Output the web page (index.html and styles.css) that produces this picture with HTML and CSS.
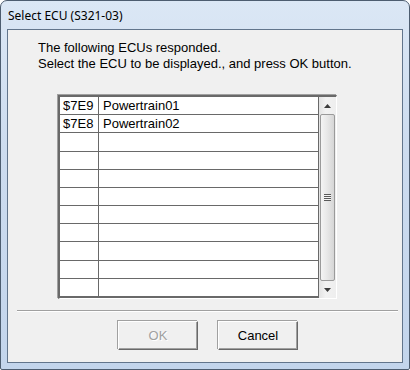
FILE: index.html
```html
<!DOCTYPE html>
<html>
<head>
<meta charset="utf-8">
<link rel="stylesheet" href="styles.css">
</head>
<body>
<div class="window">
  <div class="titlebar">Select ECU (S321-03)</div>
  <div class="client">
    <div class="message">
      <div>The following ECUs responded.</div>
      <div>Select the ECU to be displayed., and press OK button.</div>
    </div>
    <div class="listbox">
      <div class="grid">
        <div class="cell">$7E9</div><div class="cell name">Powertrain01</div>
        <div class="cell">$7E8</div><div class="cell name">Powertrain02</div>
        <div class="cell"></div><div class="cell"></div>
        <div class="cell"></div><div class="cell"></div>
        <div class="cell"></div><div class="cell"></div>
        <div class="cell"></div><div class="cell"></div>
        <div class="cell"></div><div class="cell"></div>
        <div class="cell"></div><div class="cell"></div>
        <div class="cell"></div><div class="cell"></div>
        <div class="cell"></div><div class="cell"></div>
        <div class="cell"></div><div class="cell"></div>
      </div>
      <div class="scrollbar">
        <div class="arrow">
          <svg width="7" height="4" viewBox="0 0 7 4"><path d="M0 4 L3.5 0 L7 4 Z" fill="#3c3c3c"/></svg>
        </div>
        <div class="track">
          <div class="thumb">
            <div class="grip"></div>
          </div>
        </div>
        <div class="arrow">
          <svg width="7" height="4" viewBox="0 0 7 4"><path d="M0 0 L7 0 L3.5 4 Z" fill="#3c3c3c"/></svg>
        </div>
      </div>
    </div>
    <div class="separator"></div>
    <div class="buttons">
      <button class="btn disabled">OK</button>
      <button class="btn">Cancel</button>
    </div>
  </div>
</div>
</body>
</html>
```
FILE: styles.css
```css
html, body {
  margin: 0;
  padding: 0;
  background: #ffffff;
}

.window {
  box-sizing: border-box;
  width: 410px;
  height: 370px;
  border: 1px solid #4d5d70;
  border-radius: 7px 7px 2px 2px;
  background: linear-gradient(to bottom, #dbe7f5 0%, #cddcef 40%, #c3d5ec 100%);
  padding: 0 6px 6px 6px;
  display: flex;
  flex-direction: column;
  font-family: "Liberation Sans", Arial, sans-serif;
}

.titlebar {
  height: 28px;
  line-height: 30px;
  padding-left: 1px;
  font-family: "Noto Sans", "Open Sans", sans-serif;
  font-size: 12px;
  color: #000;
}

.client {
  flex: 1;
  border: 1px solid #62758c;
  background: #f0f0f0;
  display: flex;
  flex-direction: column;
}

.message {
  padding: 10px 0 0 30px;
  font-size: 13px;
  line-height: 16px;
  color: #000;
}

.listbox {
  margin: 23px 0 0 50px;
  width: 279px;
  box-sizing: border-box;
  border-top: 2px solid #696969;
  border-left: 2px solid #696969;
  border-right: 1px solid #ffffff;
  border-bottom: 1px solid #ffffff;
  display: flex;
  box-shadow: -1px -1px 0 #a0a0a0;
}

.grid {
  width: 259px;
  height: 201px;
  box-sizing: border-box;
  display: grid;
  grid-template-columns: 38px 1fr;
  grid-template-rows: repeat(11, 1fr);
  gap: 1px;
  background: #696969;
  border-right: 1px solid #696969;
  border-bottom: 2px solid #696969;
}

.cell {
  background: #ffffff;
  font-size: 13px;
  line-height: 17px;
  padding-left: 3px;
  color: #000;
  overflow: hidden;
}

.cell.name {
  padding-left: 4px;
}

.scrollbar {
  width: 17px;
  display: flex;
  flex-direction: column;
  background: linear-gradient(to right, #e3e3e3, #f2f2f2 40%, #eeeeee);
}

.arrow {
  height: 17px;
  display: flex;
  align-items: center;
  justify-content: center;
}

.track {
  flex: 1;
  padding: 0 1px;
  display: flex;
  flex-direction: column;
}

.thumb {
  flex: 1;
  border: 1px solid #9a9a9a;
  border-radius: 2px;
  background: linear-gradient(to right, #f4f4f4, #e8e8e8 45%, #d6d6d6);
  display: flex;
  align-items: center;
  justify-content: center;
}

.grip {
  width: 7px;
  height: 7px;
  background: repeating-linear-gradient(to bottom, #5a5a5a 0, #5a5a5a 1px, #f4f4f4 1px, #f4f4f4 2px);
}

.separator {
  margin: 11px 4px 0 9px;
  height: 1px;
  background: #a0a0a0;
  border-bottom: 1px solid #ffffff;
}

.buttons {
  display: flex;
  gap: 20px;
  padding: 9px 0 0 110px;
}

.btn {
  box-sizing: border-box;
  width: 80px;
  height: 29px;
  margin: 0;
  padding: 0;
  background: #f0f0f0;
  border-top: 1px solid #ffffff;
  border-left: 1px solid #ffffff;
  border-right: 1px solid #696969;
  border-bottom: 1px solid #696969;
  box-shadow: inset -1px -1px 0 #a0a0a0, -1px -1px 0 #a0a0a0;
  font-family: "Liberation Sans", Arial, sans-serif;
  font-size: 13px;
  color: #000;
}

.btn.disabled {
  color: #a0a0a0;
  text-shadow: 1px 1px 0 #ffffff;
}
```
